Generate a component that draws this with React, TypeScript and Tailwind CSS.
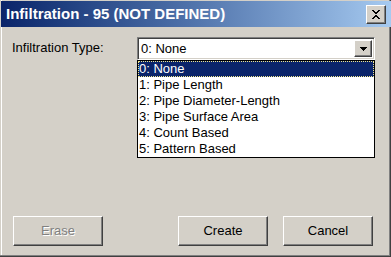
const raised =
  'border border-t-white border-l-white border-b-[#404040] border-r-[#404040] shadow-[inset_-1px_-1px_#808080] bg-[#D4D0C8]';

const items = [
  '0: None',
  '1: Pipe Length',
  '2: Pipe Diameter-Length',
  '3: Pipe Surface Area',
  '4: Count Based',
  '5: Pattern Based',
];

function CloseIcon() {
  return (
    <svg width="10" height="9" viewBox="0 0 10 9" shapeRendering="crispEdges">
      <path d="M1 0h2v1h1v1h2V1h1V0h2v1H8v1H7v1H6v1H5h0v1h1v1h1v1h1v1h1v1H7V8H6V7H4v1H3v1H1V8h1V7h1V6h1V5h1V4H4V3H3V2H2V1H1z" fill="#000" />
    </svg>
  );
}

function Button({ label, disabled }: { label: string; disabled?: boolean }) {
  return (
    <div className={`${raised} w-[90px] h-[30px] flex items-center justify-center`}>
      <span
        className={
          disabled
            ? 'text-[#808080] [text-shadow:1px_1px_0_#fff]'
            : 'text-black'
        }
      >
        {label}
      </span>
    </div>
  );
}

export default function App() {
  return (
    <div className="w-[391px] h-[257px] bg-[#D4D0C8] flex flex-col font-['Liberation_Sans',Arial,sans-serif] text-[13px] leading-[16px] text-black shadow-[inset_-1px_-1px_#404040,inset_-2px_-2px_#808080,inset_1px_0_#D4D0C8,inset_2px_0_#fff] overflow-hidden">
      {/* title bar */}
      <div className="h-[26px] mt-[1px] ml-[1px] flex items-center pl-[5px] pr-[5px] bg-gradient-to-r from-[#0A246A] to-[#A6CAF0]">
        <span className="text-white font-bold text-[15px] leading-[18px]">
          Infiltration - 95 (NOT DEFINED)
        </span>
        <div className={`${raised} ml-auto w-[20px] h-[19px] flex items-center justify-center`}>
          <CloseIcon />
        </div>
      </div>

      {/* body */}
      <div className="flex-1 flex flex-col pb-[11px] relative">
        <div className="flex items-start mt-[10px]">
          <span className="ml-[12px] mt-[3px] w-[125px]">Infiltration Type:</span>
          <div className="relative w-[238px] h-[23px] bg-white border border-t-[#808080] border-l-[#808080] border-b-white border-r-white shadow-[inset_1px_1px_#404040,inset_-1px_-1px_#D4D0C8] flex items-center">
            <span className="ml-[3px]">0: None</span>
            <div className={`${raised} ml-auto mr-[2px] w-[18px] h-[17px] flex items-center justify-center`}>
              <svg width="7" height="4" viewBox="0 0 7 4" shapeRendering="crispEdges">
                <path d="M0 0h7v1H6v1H5v1H4v1H3V3H2V2H1V1H0z" fill="#000" />
              </svg>
            </div>

            {/* open list */}
            <div className="absolute left-[-1px] top-[22px] w-[238px] bg-white border border-black z-10">
              {items.map((it, i) => (
                <div
                  key={it}
                  className={
                    i === 0
                      ? 'h-[16px] pl-[1px] bg-[#0A246A] text-white outline outline-1 outline-dotted outline-[#F0E68C] -outline-offset-1'
                      : 'h-[16px] pl-[1px]'
                  }
                >
                  {it}
                </div>
              ))}
            </div>
          </div>
        </div>

        <div className="mt-auto flex items-center">
          <div className="ml-[13px]">
            <Button label="Erase" disabled />
          </div>
          <div className="ml-auto flex gap-[15px] mr-[18px]">
            <Button label="Create" />
            <Button label="Cancel" />
          </div>
        </div>
      </div>
    </div>
  );
}
